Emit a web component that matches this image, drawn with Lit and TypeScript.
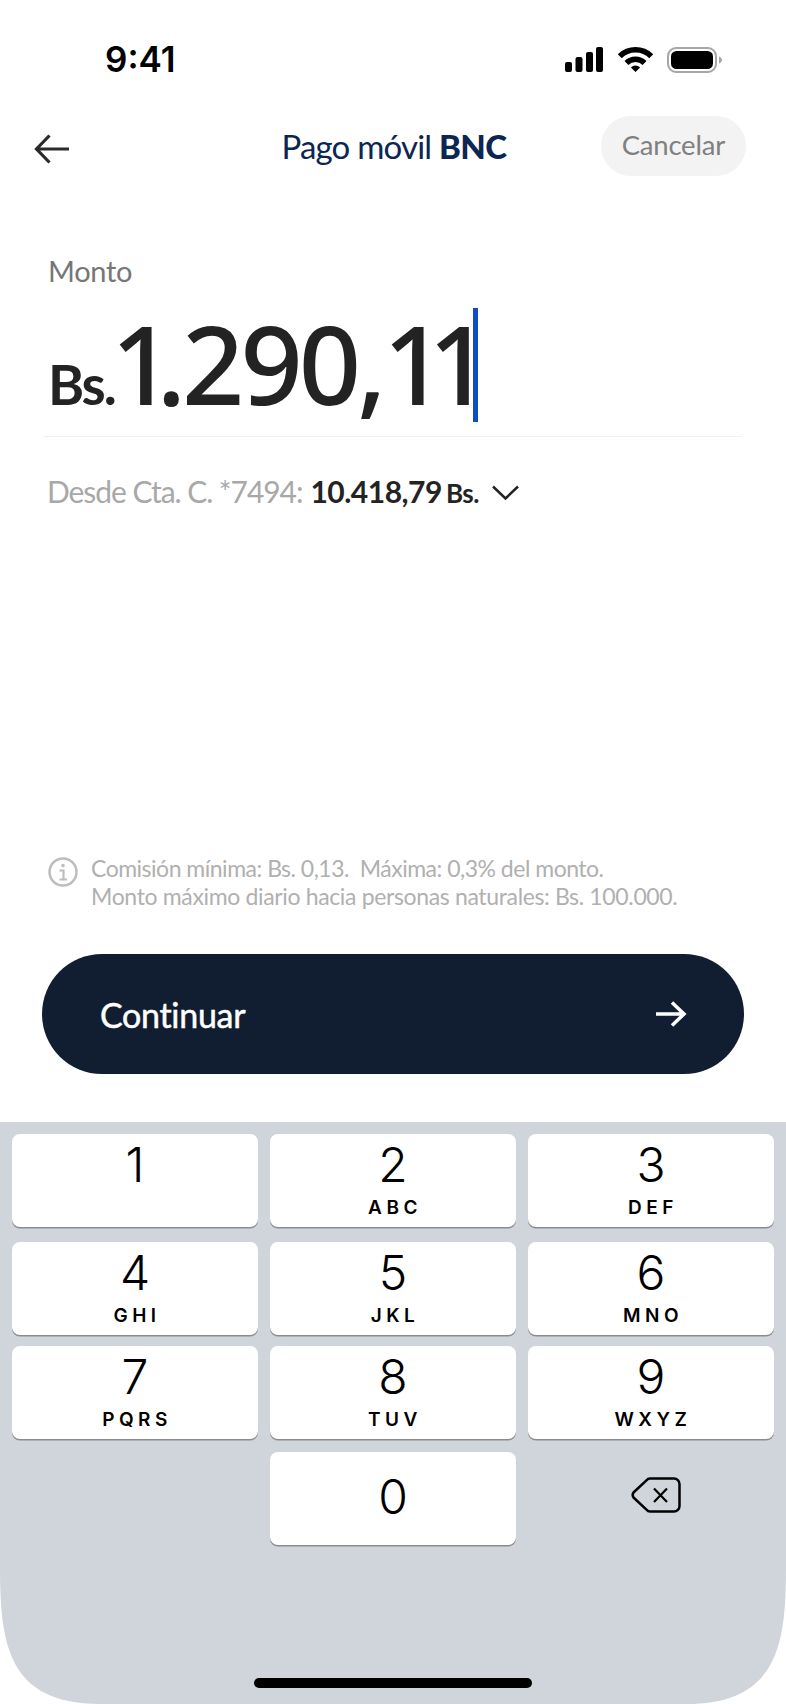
import { LitElement, html, css, svg } from 'lit';
import { customElement } from 'lit/decorators.js';

const KEYS = [
  ['1', ''], ['2', 'ABC'], ['3', 'DEF'],
  ['4', 'GHI'], ['5', 'JKL'], ['6', 'MNO'],
  ['7', 'PQRS'], ['8', 'TUV'], ['9', 'WXYZ'],
];

const wifi = svg`<path d="M-.2 7.3A25 25 0 0 1 35.2 7.3L31.3 11.2A19.5 19.5 0 0 0 3.7 11.2Z"/><path d="M6.5 14A15.5 15.5 0 0 1 28.5 14L24.6 17.9A10 10 0 0 0 10.4 17.9Z"/><path d="M12.9 20.4A6.5 6.5 0 0 1 22.1 20.4L17.5 25Z"/>`;

@customElement('app-root')
export class AppRoot extends LitElement {
  static styles = css`
    :host {
      display: block;
      width: 786px;
      height: 1704px;
      background: #fff;
      font-family: 'Lato', 'Liberation Sans', sans-serif;
      overflow: hidden;
    }
    .page { display: flex; flex-direction: column; height: 1704px; }
    svg { display: block; overflow: visible; }

    .status {
      display: flex;
      align-items: center;
      justify-content: space-between;
      height: 25px;
      margin-top: 47px;
      padding: 0 64px 0 105px;
    }
    .time { font: 600 35px/25px 'Inter', sans-serif; color: #000; }
    .status-icons { display: flex; align-items: center; }
    .signal { margin-right: 15px; }
    .wifi { margin-right: 14px; }

    .nav {
      display: grid;
      grid-template-columns: 1fr auto 1fr;
      align-items: center;
      height: 60px;
      margin-top: 44px;
      padding: 0 40px 0 42px;
    }
    .back { margin: 5px 0 0 -8px; }
    .title { font-size: 33px; letter-spacing: -0.8px; color: #0c2654; }
    .title b { font-weight: 900; letter-spacing: -0.5px; }
    .cancel {
      justify-self: end;
      display: flex;
      align-items: center;
      height: 57px;
      padding: 0 21px 3px;
      border-radius: 30px;
      background: #f4f3f4;
      color: #808080;
      font-size: 27.5px;
      letter-spacing: -0.2px;
    }

    .amount-box { padding: 0 46px 0 48px; margin-top: 78px; }
    .label { font-size: 29px; line-height: 34px; color: #767676; letter-spacing: -0.3px; }
    .amount {
      display: flex;
      align-items: baseline;
      height: 114px;
      margin-top: 20px;
      line-height: 110px;
      color: #232323;
    }
    .currency { font-size: 55px; font-weight: 700; letter-spacing: -1.8px; margin-left: 0; }
    .value { font: 500 109px/110px 'Noto Sans', sans-serif; letter-spacing: -4px; margin-left: -4px; }
    .value i { font-style: normal; letter-spacing: -17px; }
    .caret { align-self: flex-start; width: 5px; height: 114px; margin-left: -1px; background: #0d4fbf; }
    .rule { height: 1px; background: #f0f0f0; margin: 14px 44px 0 44px; }

    .from {
      display: flex;
      align-items: baseline;
      margin-top: 36px;
      padding-left: 47px;
      font-size: 30px;
      line-height: 36px;
      color: #a8a8a8;
      letter-spacing: -1.05px;
    }
    .from strong { font-weight: 700; color: #232323; margin-left: 8px; letter-spacing: -0.5px; }
    .from small { font-size: 26px; font-weight: 700; color: #232323; margin-left: 4px; letter-spacing: -0.4px; }
    .from svg { align-self: center; margin-left: 13px; }

    .spacer { flex: 1; }

    .info { display: flex; padding-left: 48px; gap: 13px; }
    .info svg { margin-top: 3px; flex: none; }
    .info p { margin: 0; font-size: 23px; line-height: 28px; color: #b0b0b0; letter-spacing: -0.35px; }
    .info span { letter-spacing: -0.5px; }

    .continue {
      display: flex;
      align-items: center;
      justify-content: space-between;
      height: 120px;
      margin: 44px 42px 48px 42px;
      padding: 0 58px 0 58px;
      border: 0;
      border-radius: 60px;
      background: #111e31;
      color: #fff;
      font-family: inherit;
      font-size: 34px;
      letter-spacing: -0.3px;
      -webkit-text-stroke: 0.5px #fff;
    }

    .keyboard {
      position: relative;
      height: 582px;
      flex: none;
      box-sizing: border-box;
      padding: 12px 12px 0;
      background: #d0d4db;
      clip-path: path('M0 0H786V441C786 518 781 582 686 582H100C5 582 0 518 0 441Z');
    }
    .keys {
      display: grid;
      grid-template-columns: repeat(3, 246px);
      grid-template-rows: 108px 104px 106px 93px;
      column-gap: 12px;
    }
    .key {
      display: flex;
      flex-direction: column;
      align-items: center;
      height: 92.5px;
      border-radius: 8px;
      background: #fff;
      box-shadow: 0 1.5px 0 #8a8c90;
      color: #000;
      font-family: 'Inter', sans-serif;
    }
    .digit { font-size: 48px; line-height: 58px; margin-top: 2px; font-weight: 300; }
    .zero .digit { margin-top: 16px; }
    .letters { font-size: 19px; line-height: 22px; font-weight: 600; letter-spacing: 4.5px; margin-left: 4px; margin-top: 3px; }
    .delete { display: flex; justify-content: center; padding: 25px 0 0 9px; }
    .home {
      position: absolute;
      left: 254px;
      bottom: 16px;
      width: 278px;
      height: 10px;
      border-radius: 5px;
      background: #000;
    }
  `;

  render() {
    return html`
      <div class="page">
        <div class="status">
          <span class="time">9:41</span>
          <div class="status-icons">
            <svg class="signal" width="38" height="25" viewBox="0 0 38 25" fill="#000">
              <rect x="0" y="15" width="7" height="10" rx="2"/>
              <rect x="10.5" y="10" width="7" height="15" rx="2"/>
              <rect x="21" y="5" width="7" height="20" rx="2"/>
              <rect x="31" y="0" width="7" height="25" rx="2"/>
            </svg>
            <svg class="wifi" width="35" height="25" viewBox="0 0 35 25" fill="#000">${wifi}</svg>
            <svg width="55" height="26" viewBox="0 0 55 26" fill="none">
              <rect x="1" y="1" width="48" height="24" rx="8" stroke="#a6a6a6" stroke-width="2"/>
              <rect x="4" y="4" width="42" height="18" rx="5.5" fill="#000"/>
              <path d="M52 9.5c1.8.6 3 2 3 3.5s-1.200 2.900-3 3.500z" fill="#a6a6a6"/>
            </svg>
          </div>
        </div>

        <div class="nav">
          <svg class="back" width="36" height="30" viewBox="0 0 36 30" fill="none" stroke="#2a2a2a" stroke-width="3.2">
            <path d="M35 15H3M15.500 1.500 2.500 15l13 13.500"/>
          </svg>
          <div class="title">Pago móvil <b>BNC</b></div>
          <div class="cancel">Cancelar</div>
        </div>

        <div class="amount-box">
          <div class="label">Monto</div>
          <div class="amount">
            <span class="currency">Bs.</span>
            <span class="value"><i>1</i>.290,<i>1</i><i>1</i></span>
            <span class="caret"></span>
          </div>
        </div>
        <div class="rule"></div>

        <div class="from">
          <span>Desde Cta. C. *7494:</span>
          <strong>10.418,79</strong>
          <small>Bs.</small>
          <svg width="27" height="15" viewBox="0 0 27 15" fill="none" stroke="#232323" stroke-width="2.500">
            <path d="M1 1.500 13.500 13.500 26 1.500"/>
          </svg>
        </div>

        <div class="spacer"></div>

        <div class="info">
          <svg width="30" height="30" viewBox="0 0 30 30" fill="none" stroke="#bdbdbd" stroke-width="2.500">
            <circle cx="15" cy="15" r="13.500"/>
            <path d="M11.500 13.500H15.500V22M11.500 22.500H19" stroke-width="2.200"/>
            <circle cx="15" cy="8.500" r="1.800" fill="#bdbdbd" stroke="none"/>
          </svg>
          <p><span>Comisión mínima: Bs. 0,13.&nbsp; Máxima: 0,3% del monto.</span><br>Monto máximo diario hacia personas naturales: Bs. 100.000.</p>
        </div>

        <button class="continue">
          <span>Continuar</span>
          <svg width="30" height="26" viewBox="0 0 30 26" fill="none" stroke="#fff" stroke-width="3.500">
            <path d="M0 13H27M16 1.500 28 13 16 24.500"/>
          </svg>
        </button>

        <div class="keyboard">
          <div class="keys">
            ${KEYS.map(([digit, letters]) => html`
              <div class="key">
                <span class="digit">${digit}</span>
                ${letters ? html`<span class="letters">${letters}</span>` : ''}
              </div>
            `)}
            <div></div>
            <div class="key zero"><span class="digit">0</span></div>
            <div class="delete">
              <svg width="50" height="36" viewBox="0 0 50 36" fill="none" stroke="#000" stroke-width="2.500">
                <path d="M19 1.500H43a5.500 5.500 0 0 1 5.500 5.500V29a5.500 5.500 0 0 1-5.500 5.500H19a4 4 0 0 1-3.300-1.700L2.500 20.500a4.500 4.500 0 0 1 0-5L15.700 3.200A4 4 0 0 1 19 1.500Z" stroke-linejoin="round"/>
                <path d="M23 11.500 36 25M36 11.500 23 25" stroke-width="2.200"/>
              </svg>
            </div>
          </div>
          <div class="home"></div>
        </div>
      </div>
    `;
  }
}
